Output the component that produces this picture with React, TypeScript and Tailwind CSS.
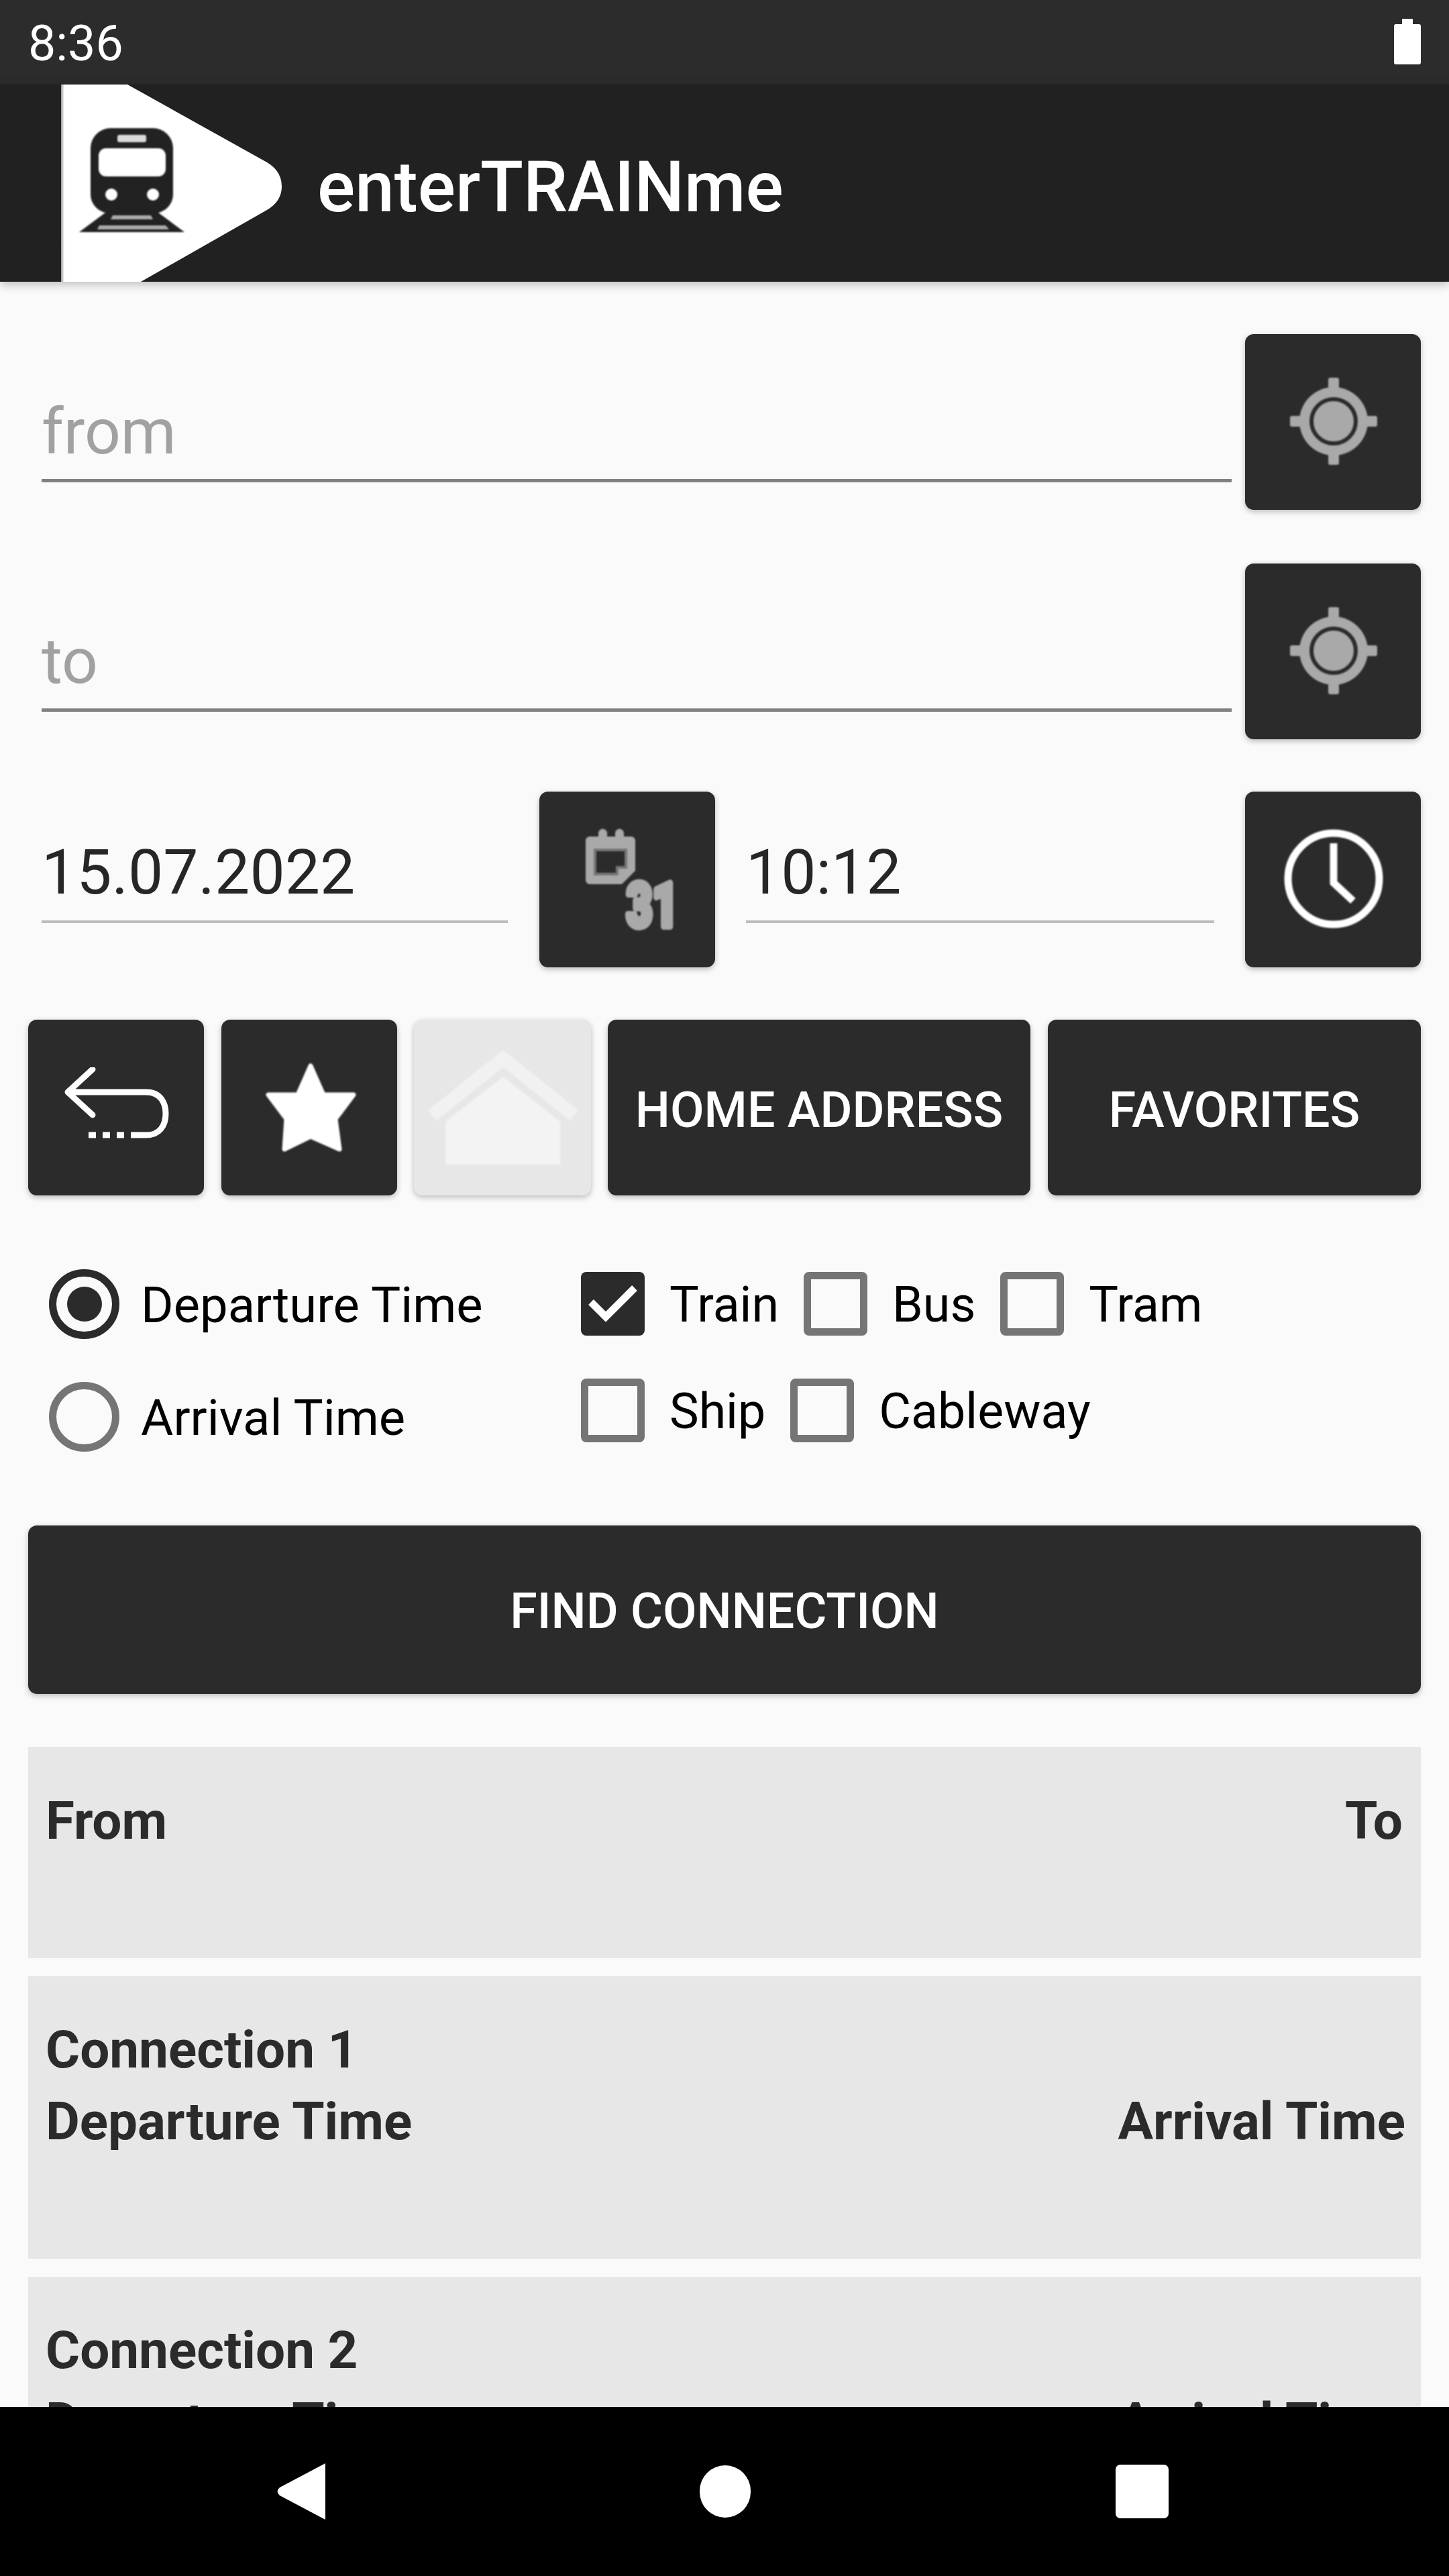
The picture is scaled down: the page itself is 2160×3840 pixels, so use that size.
import React from "react";

const Locate = () => (
  <svg width="140" height="140" viewBox="-71 -69 140 140" className="blur-[0.8px]">
    <g fill="#a9a9a9">
      <rect x="-8" y="-65" width="16" height="130" rx="3" />
      <rect x="-65" y="-8" width="130" height="16" rx="3" />
      <circle r="51" />
    </g>
    <circle r="33" fill="#a9a9a9" stroke="#2b2b2b" strokeWidth="6" />
  </svg>
);

const Calendar = () => (
  <svg width="170" height="190" viewBox="850 1216 170 190" className="blur-[0.8px]">
    <path
      d="M879 1247h13v-5a6.5 6.5 0 0 1 13 0v5h12v-5a6.5 6.5 0 0 1 13 0v5h11a6 6 0 0 1 6 6v45l-20 20h-48a6 6 0 0 1-6-6v-59a6 6 0 0 1 6-6z"
      fill="#a9a9a9"
    />
    <path d="M887 1267H933V1293H920V1303H887Z" fill="#2b2b2b" stroke="#757575" strokeWidth="4" />
    <text
      x="934"
      y="1381"
      fontFamily="Roboto"
      fontWeight="900"
      fontSize="90"
      fill="#a9a9a9"
      stroke="#a9a9a9"
      strokeWidth="10"
      strokeLinejoin="round"
      textLength="77"
      lengthAdjust="spacingAndGlyphs"
    >
      31
    </text>
  </svg>
);

const Clock = () => (
  <svg width="160" height="160" viewBox="-81 -79 160 160" fill="none" stroke="#fff" strokeWidth="11" className="blur-[0.8px]">
    <circle r="68" />
    <path d="M0 -53V6L29 33" />
  </svg>
);

const BackIcon = () => (
  <svg width="170" height="120" viewBox="88 1591 170 120" fill="none" stroke="#fff" strokeWidth="9" className="blur-[0.6px]">
    <path d="M138 1594L101 1628L138 1662" strokeLinejoin="round" strokeLinecap="round" />
    <path d="M102 1628H218C240 1628 247 1645 247 1660C247 1678 238 1692 218 1692H195" />
    <path d="M132 1692H143M153 1692H164M174 1692H185" />
  </svg>
);

const StarIcon = () => (
  <svg width="150" height="145" viewBox="386 1579 150 145" className="blur-[0.8px]">
    <path
      d="M463 1589L482 1632L527 1632L500 1668L506 1713L463 1694L424 1713L427 1668L400 1632L444 1632Z"
      fill="#fff"
      stroke="#fff"
      strokeWidth="7"
      strokeLinejoin="round"
    />
  </svg>
);

const HomeIcon = () => (
  <svg width="240" height="185" viewBox="629 1558 240 185" className="blur-[1.5px]">
    <path d="M644 1662L750 1577L856 1662" fill="none" stroke="#f1f1f1" strokeWidth="20" strokeLinejoin="miter" />
    <path d="M664 1671L750 1604L835 1671V1735H664Z" fill="#f3f3f3" />
  </svg>
);

const Logo = () => (
  <svg width="340" height="294" viewBox="80 126 340 294" className="shrink-0">
    <defs>
      <linearGradient id="edge" x1="0" x2="1" y1="0" y2="0">
        <stop offset="0" stopColor="#9a9a9a" />
        <stop offset="1" stopColor="#ffffff" />
      </linearGradient>
    </defs>
    <path d="M93 126H190L398 242Q420 255 420 278Q420 300 398 313L210 420H93Z" fill="#fff" />
    <rect x="91" y="126" width="5" height="294" fill="url(#edge)" />
    <g className="blur-[1px]">
      <path
        d="M135 220a30 30 0 0 1 30-29h63a30 30 0 0 1 30 29v70a28 28 0 0 1-22 27l39 29H118l39-29a28 28 0 0 1-22-27z"
        fill="#222"
      />
      <rect x="175" y="201" width="43" height="11" rx="3" fill="#d9d9d9" />
      <rect x="147" y="221" width="100" height="42" rx="11" fill="#fff" />
      <circle cx="166" cy="290" r="9" fill="#fff" />
      <circle cx="228" cy="290" r="9" fill="#fff" />
      <path d="M168 321H225L228 327H165Z" fill="#aaa" />
      <path d="M148 336H247L252 342H145Z" fill="#aaa" />
    </g>
  </svg>
);

const IconButton = ({ children, className = "" }: { children: React.ReactNode; className?: string }) => (
  <div
    className={`w-[262px] h-[262px] shrink-0 rounded-[13px] bg-[#2b2b2b] flex items-center justify-center shadow-[0_3px_8px_rgba(0,0,0,0.25)] ${className}`}
  >
    {children}
  </div>
);

const TextButton = ({ label, className }: { label: string; className: string }) => (
  <div
    className={`h-[262px] shrink-0 rounded-[13px] bg-[#2b2b2b] flex items-center justify-center pt-[8px] text-white text-[73.5px] font-medium shadow-[0_3px_8px_rgba(0,0,0,0.25)] ${className}`}
  >
    {label}
  </div>
);

const Box = ({ checked }: { checked?: boolean }) =>
  checked ? (
    <div className="w-[95px] h-[95px] shrink-0 rounded-[8px] bg-[#2b2b2b] flex items-center justify-center">
      <svg width="95" height="95" viewBox="0 0 95 95" fill="none" stroke="#fff" strokeWidth="11">
        <path d="M15 45L37 67L80 24" />
      </svg>
    </div>
  ) : (
    <div className="w-[95px] h-[95px] shrink-0 rounded-[8px] border-[11px] border-[#757575]" />
  );

const Check = ({ label, checked }: { label: string; checked?: boolean }) => (
  <div className="flex items-center gap-[37px] h-[95px] mr-[37px]">
    <Box checked={checked} />
    <span className="text-[73.5px] leading-[95px] pt-[4px] text-black">{label}</span>
  </div>
);

const Radio = ({ label, checked }: { label: string; checked?: boolean }) => (
  <div className="flex items-center gap-[32px] h-[104px]">
    <div
      className={`w-[105px] h-[104px] shrink-0 rounded-full border-[11px] flex items-center justify-center ${
        checked ? "border-[#2b2b2b]" : "border-[#757575]"
      }`}
    >
      {checked && <div className="w-[52px] h-[52px] rounded-full bg-[#2b2b2b]" />}
    </div>
    <span className="text-[74.2px] leading-[104px] pt-[4px] text-black">{label}</span>
  </div>
);

const Field = ({ value, hint, className }: { value: string; hint?: boolean; className: string }) => (
  <div className={`self-end ${className}`}>
    <div className={hint ? "text-[94.5px] leading-[110px] pb-[15px] text-[#a1a1a1]" : "text-[93px] leading-[110px] pb-[16px] text-[#262626]"}>{value}</div>
  </div>
);

const Row = ({ left, right, shift }: { left: string; right?: string; shift?: boolean }) => (
  <div className="flex justify-between">
    <span>{left}</span>
    {right && <span className={shift ? "-mr-[4px]" : ""}>{right}</span>}
  </div>
);

export default function App() {
  return (
    <div className="w-[2160px] h-[3840px] flex flex-col overflow-hidden bg-[#fafafa] font-['Roboto',sans-serif]">
      <div className="h-[126px] shrink-0 bg-[#2c2c2c] flex items-center justify-between pl-[42px] pr-[42px] text-white text-[73.5px]">
        <span className="leading-[126px] pt-[4px]">8:36</span>
        <svg width="40" height="68" viewBox="0 0 40 68" className="-mt-[2px]">
          <path d="M12 0h16v8h9a3 3 0 0 1 3 3v54a3 3 0 0 1-3 3H3a3 3 0 0 1-3-3V11a3 3 0 0 1 3-3h9z" fill="#fff" />
        </svg>
      </div>
      <div className="h-[294px] shrink-0 bg-[#212121] flex items-center pl-[80px] shadow-[0_4px_14px_rgba(0,0,0,0.25)] z-10">
        <Logo />
        <span className="ml-[53px] mt-[14px] text-white text-[105px] font-medium leading-[120px]">enterTRAINme</span>
      </div>

      <div className="flex-1 min-h-0 overflow-hidden px-[42px] pt-[78px]">
        <div className="flex">
          <Field value="from" hint className="flex-1 ml-[20px] mr-[20px] mb-[41px] border-b-[5px] border-[#808080]" />
          <IconButton>
            <Locate />
          </IconButton>
        </div>
        <div className="flex mt-[80px]">
          <Field value="to" hint className="flex-1 ml-[20px] mr-[20px] mb-[41px] border-b-[5px] border-[#808080]" />
          <IconButton>
            <Locate />
          </IconButton>
        </div>
        <div className="flex mt-[78px]">
          <Field value="15.07.2022" className="w-[695px] ml-[20px] mr-[47px] mb-[66px] border-b-[4px] border-[#bdbdbd]" />
          <IconButton>
            <Calendar />
          </IconButton>
          <Field value="10:12" className="flex-1 ml-[46px] mr-[46px] mb-[66px] border-b-[4px] border-[#bdbdbd]" />
          <IconButton>
            <Clock />
          </IconButton>
        </div>
        <div className="flex mt-[78px]">
          <IconButton>
            <BackIcon />
          </IconButton>
          <IconButton className="ml-[26px]">
            <StarIcon />
          </IconButton>
          <IconButton className="ml-[25px] !w-[264px] !bg-[#e7e7e7]">
            <HomeIcon />
          </IconButton>
          <TextButton label="HOME ADDRESS" className="w-[630px] ml-[25px]" />
          <TextButton label="FAVORITES" className="w-[556px] ml-[26px]" />
        </div>

        <div className="flex mt-[110px] h-[272px]">
          <div className="w-[824px] pl-[31px] flex flex-col gap-[64px]">
            <Radio label="Departure Time" checked />
            <Radio label="Arrival Time" />
          </div>
          <div className="flex flex-col gap-[64px] pt-[4px]">
            <div className="flex">
              <Check label="Train" checked />
              <Check label="Bus" />
              <Check label="Tram" />
            </div>
            <div className="flex">
              <Check label="Ship" />
              <Check label="Cableway" />
            </div>
          </div>
        </div>

        <div className="mt-[110px] h-[251px] rounded-[13px] bg-[#2b2b2b] flex items-center justify-center pt-[6px] text-white text-[73.5px] font-medium shadow-[0_3px_8px_rgba(0,0,0,0.25)]">
          FIND CONNECTION
        </div>

        <div className="mt-[79px] flex flex-col gap-[27px] text-[#2b2b2b] text-[78.2px] font-bold leading-[107px]">
          <div className="h-[315px] shrink-0 bg-[#e7e7e7] pl-[26px] pr-[27px] pt-[57px]">
            <Row left="From" right="To" />
          </div>
          <div className="h-[421px] shrink-0 bg-[#e7e7e7] pl-[26px] pr-[27px] pt-[56px]">
            <Row left="Connection 1" />
            <Row left="Departure Time" right="Arrival Time" shift />
          </div>
          <div className="h-[421px] shrink-0 bg-[#e7e7e7] pl-[26px] pr-[27px] pt-[56px]">
            <Row left="Connection 2" />
            <Row left="Departure Time" right="Arrival Time" shift />
          </div>
        </div>
      </div>

      <div className="h-[252px] shrink-0 bg-black flex items-center pl-[413px]">
        <svg width="72" height="84" viewBox="0 0 72 84" className="shrink-0">
          <path d="M72 0V84L4 48Q-3 42 4 36Z" fill="#fff" />
        </svg>
        <div className="w-[76px] h-[78px] ml-[558px] shrink-0 rounded-full bg-white" />
        <div className="w-[79px] h-[80px] ml-[544px] shrink-0 rounded-[7px] bg-white" />
      </div>
    </div>
  );
}
